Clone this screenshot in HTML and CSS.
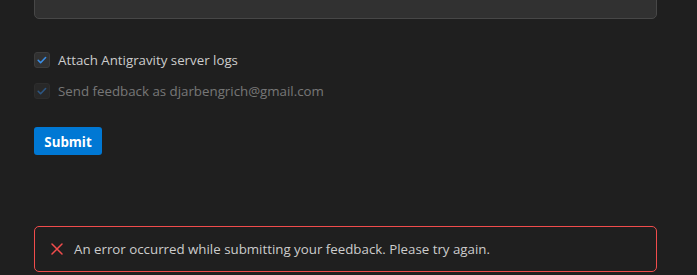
FILE: index.html
```html
<!DOCTYPE html>
<html>
<head>
<meta charset="utf-8">
<link rel="stylesheet" href="styles.css">
</head>
<body>
<div class="page">
  <div class="textarea"></div>
  <div class="options">
    <label class="option">
      <span class="box"><svg viewBox="0 0 16 16" width="16" height="16"><path d="M4.2 8.3l2.4 2.4 5-5.2" fill="none" stroke="#3a8ee6" stroke-width="1.6" stroke-linecap="round" stroke-linejoin="round"/></svg></span>
      <span class="label">Attach Antigravity server logs</span>
    </label>
    <label class="option disabled">
      <span class="box"><svg viewBox="0 0 16 16" width="16" height="16"><path d="M4.2 8.3l2.4 2.4 5-5.2" fill="none" stroke="#3a8ee6" stroke-width="1.6" stroke-linecap="round" stroke-linejoin="round"/></svg></span>
      <span class="label">Send feedback as djarbengrich@gmail.com</span>
    </label>
  </div>
  <button class="submit">Submit</button>
  <div class="error">
    <svg class="x" viewBox="0 0 12 12" width="12" height="12"><path d="M1 1l10 10M11 1L1 11" stroke="#f14c4c" stroke-width="1.5" stroke-linecap="round"/></svg>
    <span>An error occurred while submitting your feedback. Please try again.</span>
  </div>
</div>
</body>
</html>
```
FILE: styles.css
```css
html, body {
  margin: 0;
  padding: 0;
  background: #1f1f1f;
  height: 100%;
  overflow: hidden;
}
.page {
  padding: 0 40px 0 34px;
  font-family: "Open Sans", "Noto Sans", sans-serif;
  font-size: 13.3px;
  color: #cccccc;
  display: flex;
  flex-direction: column;
  align-items: flex-start;
}
.textarea {
  align-self: stretch;
  height: 60px;
  margin-top: -41px;
  background: #313131;
  border: 1px solid #474747;
  border-radius: 5px;
  box-sizing: border-box;
}
.options {
  margin-top: 33px;
  display: flex;
  flex-direction: column;
  gap: 15px;
}
.option {
  display: flex;
  align-items: center;
  gap: 8px;
  height: 16px;
}
.box {
  width: 16px;
  height: 16px;
  box-sizing: border-box;
  background: #313131;
  border: 1px solid #3c3c3c;
  border-radius: 3px;
  display: flex;
  align-items: center;
  justify-content: center;
}
.box svg {
  flex: none;
}
.option.disabled {
  opacity: 0.5;
}
.submit {
  margin-top: 28px;
  width: 68px;
  height: 28px;
  background: #0078d4;
  border: none;
  border-radius: 3px;
  color: #ffffff;
  font-family: "Open Sans", "Noto Sans", sans-serif;
  font-weight: 700;
  font-size: 13.3px;
  padding: 1px 0 0;
}
.error {
  margin-top: 71px;
  align-self: stretch;
  height: 46px;
  box-sizing: border-box;
  border: 1px solid #f14c4c;
  border-radius: 5px;
  display: flex;
  align-items: center;
  gap: 11px;
  padding-left: 16px;
}
.x {
  flex: none;
}
```
